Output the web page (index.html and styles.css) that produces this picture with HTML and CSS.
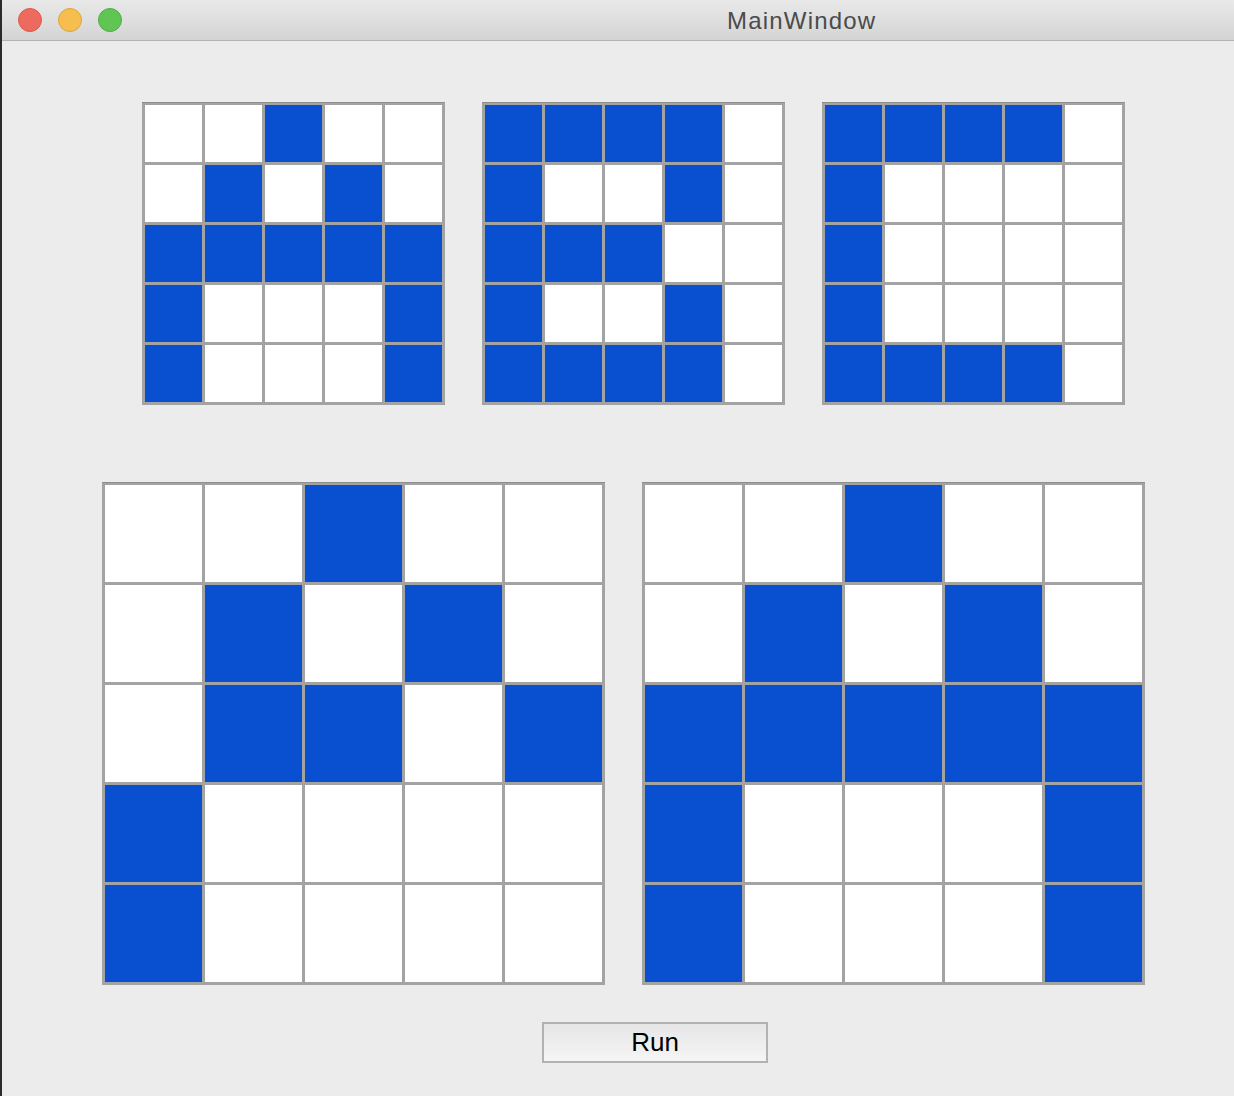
FILE: index.html
```html
<!DOCTYPE html>
<html>
<head>
<meta charset="utf-8">
<title>MainWindow</title>
<link rel="stylesheet" href="styles.css">
</head>
<body>
<div class="window">
  <div class="titlebar">
    <div class="lights">
      <span class="light red"></span>
      <span class="light yellow"></span>
      <span class="light green"></span>
    </div>
    <div class="title">MainWindow</div>
  </div>
  <div class="content">
    <div class="row small-row">
      <div class="grid small">
        <div class="c"></div><div class="c"></div><div class="c on"></div><div class="c"></div><div class="c"></div>
        <div class="c"></div><div class="c on"></div><div class="c"></div><div class="c on"></div><div class="c"></div>
        <div class="c on"></div><div class="c on"></div><div class="c on"></div><div class="c on"></div><div class="c on"></div>
        <div class="c on"></div><div class="c"></div><div class="c"></div><div class="c"></div><div class="c on"></div>
        <div class="c on"></div><div class="c"></div><div class="c"></div><div class="c"></div><div class="c on"></div>
      </div>
      <div class="grid small">
        <div class="c on"></div><div class="c on"></div><div class="c on"></div><div class="c on"></div><div class="c"></div>
        <div class="c on"></div><div class="c"></div><div class="c"></div><div class="c on"></div><div class="c"></div>
        <div class="c on"></div><div class="c on"></div><div class="c on"></div><div class="c"></div><div class="c"></div>
        <div class="c on"></div><div class="c"></div><div class="c"></div><div class="c on"></div><div class="c"></div>
        <div class="c on"></div><div class="c on"></div><div class="c on"></div><div class="c on"></div><div class="c"></div>
      </div>
      <div class="grid small">
        <div class="c on"></div><div class="c on"></div><div class="c on"></div><div class="c on"></div><div class="c"></div>
        <div class="c on"></div><div class="c"></div><div class="c"></div><div class="c"></div><div class="c"></div>
        <div class="c on"></div><div class="c"></div><div class="c"></div><div class="c"></div><div class="c"></div>
        <div class="c on"></div><div class="c"></div><div class="c"></div><div class="c"></div><div class="c"></div>
        <div class="c on"></div><div class="c on"></div><div class="c on"></div><div class="c on"></div><div class="c"></div>
      </div>
    </div>
    <div class="row large-row">
      <div class="grid large">
        <div class="c"></div><div class="c"></div><div class="c on"></div><div class="c"></div><div class="c"></div>
        <div class="c"></div><div class="c on"></div><div class="c"></div><div class="c on"></div><div class="c"></div>
        <div class="c"></div><div class="c on"></div><div class="c on"></div><div class="c"></div><div class="c on"></div>
        <div class="c on"></div><div class="c"></div><div class="c"></div><div class="c"></div><div class="c"></div>
        <div class="c on"></div><div class="c"></div><div class="c"></div><div class="c"></div><div class="c"></div>
      </div>
      <div class="grid large">
        <div class="c"></div><div class="c"></div><div class="c on"></div><div class="c"></div><div class="c"></div>
        <div class="c"></div><div class="c on"></div><div class="c"></div><div class="c on"></div><div class="c"></div>
        <div class="c on"></div><div class="c on"></div><div class="c on"></div><div class="c on"></div><div class="c on"></div>
        <div class="c on"></div><div class="c"></div><div class="c"></div><div class="c"></div><div class="c on"></div>
        <div class="c on"></div><div class="c"></div><div class="c"></div><div class="c"></div><div class="c on"></div>
      </div>
    </div>
    <div class="row button-row">
      <button class="run">Run</button>
    </div>
  </div>
</div>
</body>
</html>
```
FILE: styles.css
```css
html, body {
  margin: 0;
  padding: 0;
  height: 100%;
  overflow: hidden;
}
body {
  background: #ececec;
  font-family: "Liberation Sans", Arial, sans-serif;
}
.window {
  height: 1096px;
  width: 1234px;
  box-sizing: border-box;
  border-left: 2px solid #2b2b2b;
  background: #ececec;
  overflow: hidden;
}
.titlebar {
  height: 40px;
  border-bottom: 1px solid #b4b4b4;
  background: linear-gradient(#e9e9e9, #d4d4d4);
  display: flex;
  align-items: center;
}
.lights {
  display: flex;
  gap: 16px;
  padding-left: 16px;
}
.light {
  width: 22px;
  height: 22px;
  border-radius: 50%;
  box-sizing: content-box;
  border: 1px solid transparent;
}
.red { background: #ee6a5f; border-color: #d9584d; }
.yellow { background: #f6be4f; border-color: #dea33a; }
.green { background: #61c554; border-color: #4ead43; }
.title {
  margin-left: 605px;
  padding-top: 2px;
  font-size: 24px;
  letter-spacing: 1.2px;
  color: #4b4b4b;
  white-space: nowrap;
}
.content {
  display: flex;
  flex-direction: column;
}
.row {
  display: flex;
}
.small-row {
  padding-top: 61px;
  padding-left: 140px;
  gap: 37px;
}
.large-row {
  padding-top: 77px;
  padding-left: 100px;
  gap: 37px;
}
.button-row {
  padding-top: 37px;
  padding-left: 540px;
}
.grid {
  display: grid;
  background: #a3a3a3;
  border-top: 1px solid #8e8e8e;
  padding: 2px 3px 3px 3px;
  gap: 3px;
}
.small {
  grid-template-columns: repeat(5, 57px);
  grid-template-rows: repeat(5, 57px);
}
.large {
  grid-template-columns: repeat(5, 97px);
  grid-template-rows: repeat(5, 97px);
}
.c {
  background: #ffffff;
}
.c.on {
  background: #0950d0;
}
.run {
  width: 226px;
  height: 41px;
  box-sizing: border-box;
  border: 2px solid #b2b2b2;
  border-radius: 0;
  background: linear-gradient(#e6e6e6, #f5f5f5);
  font-family: "Liberation Sans", Arial, sans-serif;
  font-size: 26px;
  color: #000;
  padding: 0;
  margin: 0;
  line-height: 37px;
}
```
